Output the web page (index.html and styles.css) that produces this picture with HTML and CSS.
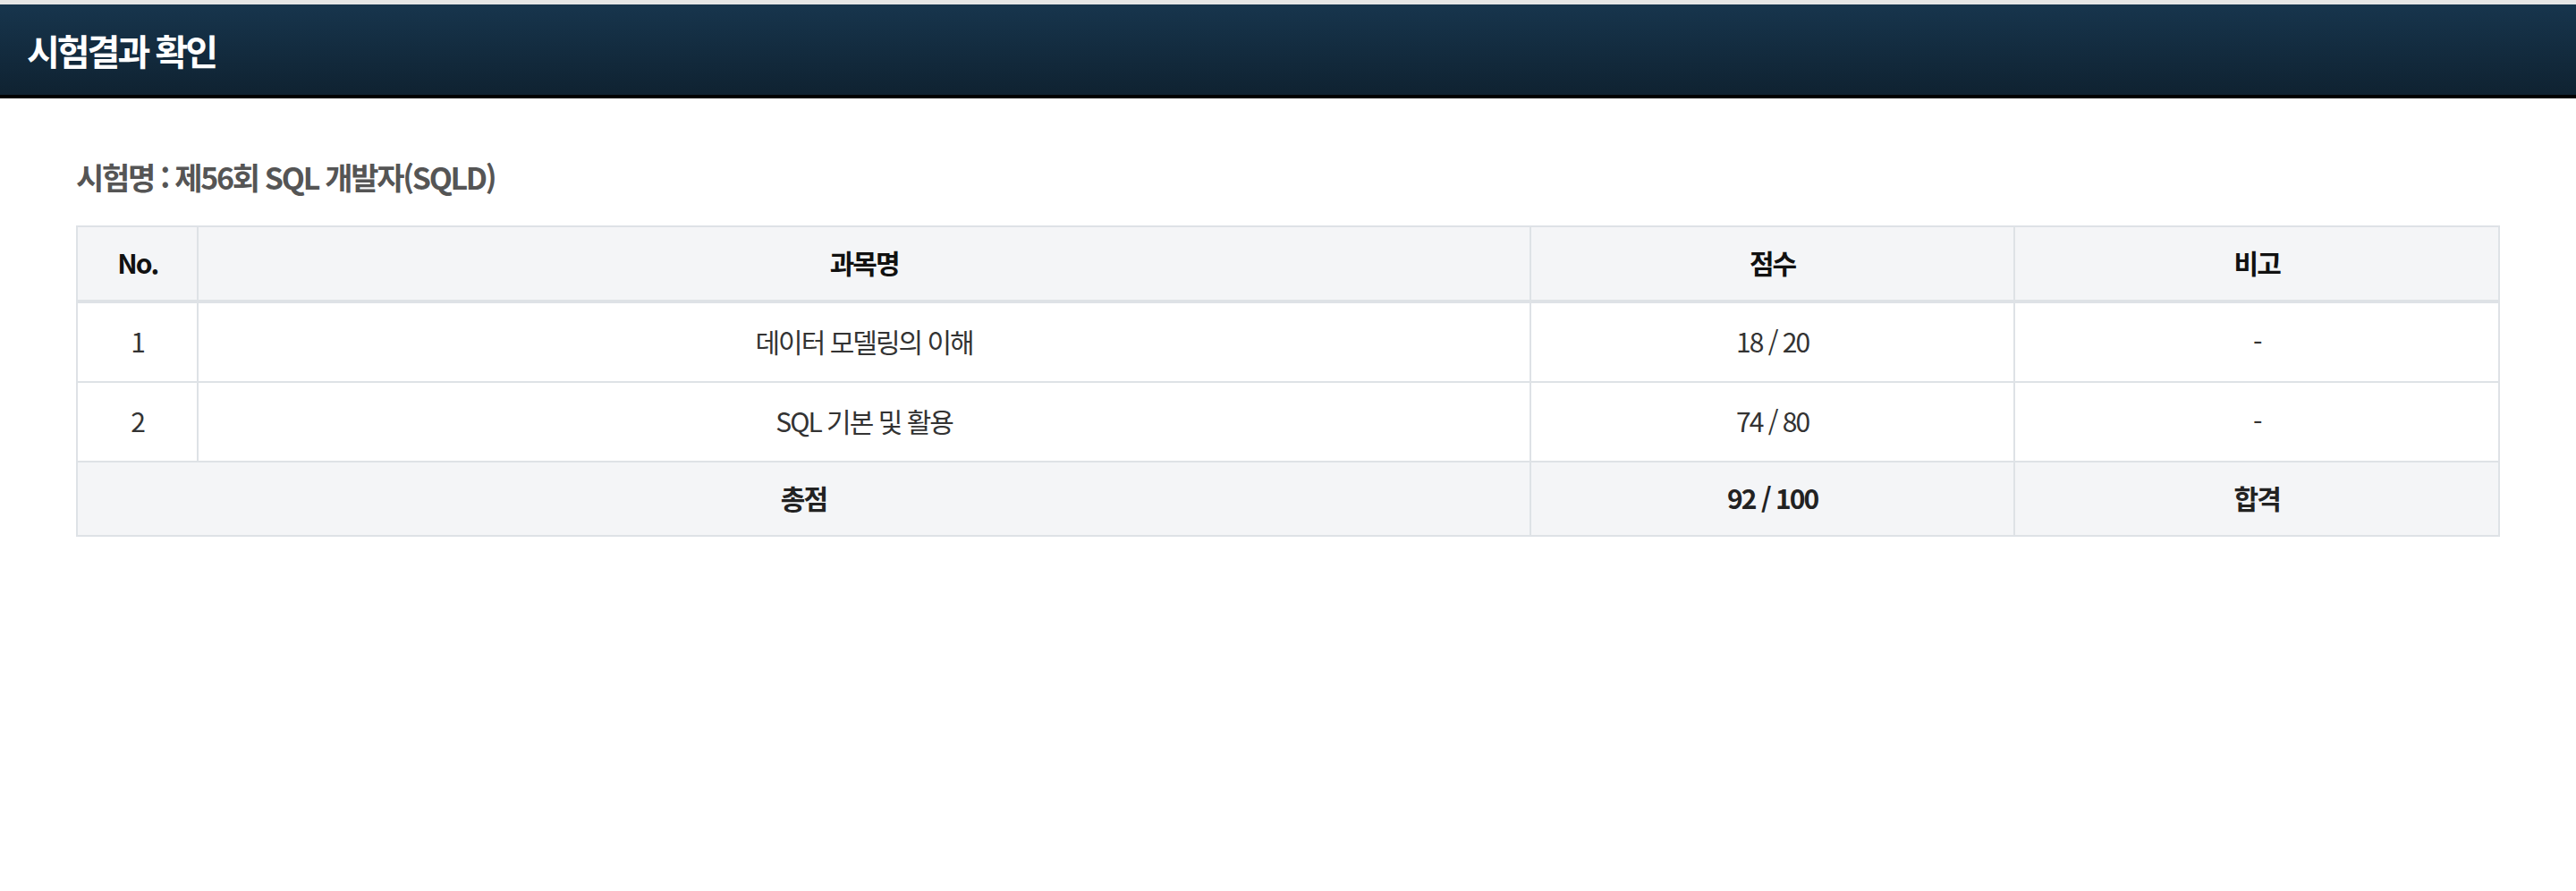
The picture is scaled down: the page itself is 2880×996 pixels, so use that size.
FILE: index.html
```
<!DOCTYPE html>
<html lang="ko">
<head>
<meta charset="utf-8">
<title>시험결과 확인</title>
<link rel="stylesheet" href="styles.css">
</head>
<body>
<div class="topstrip"></div>
<header class="titlebar">
  <h1 class="title">시험결과 확인</h1>
</header>
<main class="content">
  <h2 class="exam-name">시험명 : 제56회 SQL 개발자(SQLD)</h2>
  <table class="result">
    <colgroup>
      <col class="c-no">
      <col class="c-subj">
      <col class="c-score">
      <col class="c-note">
    </colgroup>
    <thead>
      <tr>
        <th>No.</th>
        <th>과목명</th>
        <th>점수</th>
        <th>비고</th>
      </tr>
    </thead>
    <tbody>
      <tr>
        <td>1</td>
        <td>데이터 모델링의 이해</td>
        <td>18 / 20</td>
        <td>-</td>
      </tr>
      <tr>
        <td>2</td>
        <td>SQL 기본 및 활용</td>
        <td>74 / 80</td>
        <td>-</td>
      </tr>
    </tbody>
    <tfoot>
      <tr>
        <td colspan="2">총점</td>
        <td>92 / 100</td>
        <td>합격</td>
      </tr>
    </tfoot>
  </table>
</main>
</body>
</html>
```
FILE: styles.css
```
html, body {
  margin: 0;
  padding: 0;
  background: #ffffff;
  font-family: "Noto Sans CJK KR", "Noto Sans", sans-serif;
}

.topstrip {
  height: 5px;
  background: #e6e6e6;
}

.titlebar {
  height: 101px;
  background: linear-gradient(to bottom, #17354d 0%, #0f2231 100%);
  border-bottom: 4px solid #000;
  display: flex;
  align-items: center;
  padding-left: 30px;
}

.title {
  margin: 0;
  color: #ffffff;
  font-size: 40px;
  font-weight: 700;
  letter-spacing: -3px;
  line-height: 1;
}

.content {
  padding: 0 85px 0 85px;
}

.exam-name {
  margin: 68px 0 34px 0;
  color: #555555;
  font-size: 34px;
  font-weight: 700;
  letter-spacing: -2.3px;
  line-height: 40px;
}

.result {
  width: 100%;
  border-collapse: separate;
  border-spacing: 0;
  table-layout: fixed;
  border-top: 2px solid #dee2e6;
  border-left: 2px solid #dee2e6;
  font-size: 30px;
  letter-spacing: -2px;
  text-align: center;
}

.c-no { width: 5%; }
.c-subj { width: 55%; }
.c-score { width: 20%; }
.c-note { width: 20%; }

.result th,
.result td {
  padding: 0 0 3px 0;
  border-right: 2px solid #dee2e6;
  border-bottom: 2px solid #dee2e6;
}

.result th {
  background: #f4f5f7;
  color: #111111;
  font-weight: 700;
  line-height: 78px;
  border-bottom-width: 4px;
}

.result tbody td {
  color: #333333;
  font-weight: 400;
  line-height: 84px;
}

.result tfoot td {
  background: #f4f5f7;
  color: #222222;
  font-weight: 700;
  line-height: 78px;
}
```
